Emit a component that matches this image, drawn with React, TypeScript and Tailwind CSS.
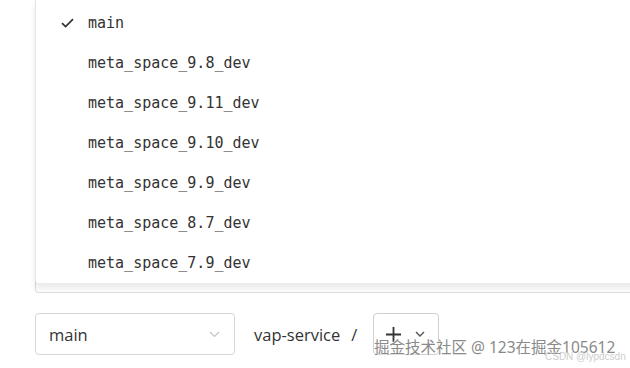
const branches = [
  "main",
  "meta_space_9.8_dev",
  "meta_space_9.11_dev",
  "meta_space_9.10_dev",
  "meta_space_9.9_dev",
  "meta_space_8.7_dev",
  "meta_space_7.9_dev",
];

export default function App() {
  return (
    <div className="relative h-[368px] w-[630px] overflow-hidden bg-white font-['Open_Sans','Noto_Sans',sans-serif]">
      {/* card underneath the open menu */}
      <div className="relative ml-[35px] -mr-4 h-[293px] rounded-b-[4px] border-x border-b border-[#dcdcdc]">
        <div className="absolute -left-px right-0 top-0 h-[283px] rounded-b-[3px] border-l border-[#e4e4e4] bg-white pt-[3px] shadow-[0_5px_6px_rgba(0,0,0,0.09)]">
          {branches.map((b, i) => (
            <div
              key={b}
              className="flex h-10 items-center font-['DejaVu_Sans_Mono','Liberation_Mono',monospace] text-[15px] text-[#333]"
            >
              <span className="flex w-[52px] justify-end pr-[14px]">
                {i === 0 && (
                  <svg width="13" height="10" viewBox="0 0 13 10" fill="none">
                    <path d="M1 5.2 4.6 8.6 12 1.2" stroke="#333" strokeWidth="1.7" />
                  </svg>
                )}
              </span>
              {b}
            </div>
          ))}
        </div>
      </div>

      <div className="mt-[20px] flex items-center pl-[35px] text-[16.5px] text-[#333]">
        <div className="flex h-[42px] w-[200px] items-center justify-between rounded-[4px] border border-[#d6d6d6] pl-[13px] pr-[14px] pt-[3px]">
          <span>main</span>
          <svg width="11" height="7" viewBox="0 0 11 7" fill="none" className="-mt-[3px]">
            <path d="M1 1l4.5 4.5L10 1" stroke="#c4c4c4" strokeWidth="1.2" />
          </svg>
        </div>
        <span className="ml-[19px] pt-[3px]">vap-service</span>
        <span className="ml-[11px] pt-[3px]">/</span>
        <div className="ml-[16px] flex h-[42px] w-[66px] items-center gap-[14px] rounded-[4px] border border-[#cfcfcf] pl-[12px]">
          <svg width="15" height="15" viewBox="0 0 15 15" fill="none">
            <path d="M7.5 0v15M0 7.5h15" stroke="#333" strokeWidth="1.8" />
          </svg>
          <svg width="10" height="6" viewBox="0 0 10 6" fill="none">
            <path d="M1 1l4 4 4-4" stroke="#555" strokeWidth="1.4" />
          </svg>
        </div>
      </div>

      {/* watermarks */}
      <div className="absolute left-[374px] top-[337px] whitespace-nowrap font-['Noto_Sans','Noto_Sans_CJK_SC',sans-serif] text-[15.5px] leading-[20px] text-[#8a8a8a] [text-shadow:0_0_2px_#fff,0_0_2px_#fff]">
        掘金技术社区 @ 123在掘金105612
      </div>
      <div className="absolute left-[545px] top-[351px] whitespace-nowrap font-['Liberation_Sans',sans-serif] text-[10px] leading-[12px] text-[#cdcdcd]">
        CSDN @lypdcsdn
      </div>
    </div>
  );
}
